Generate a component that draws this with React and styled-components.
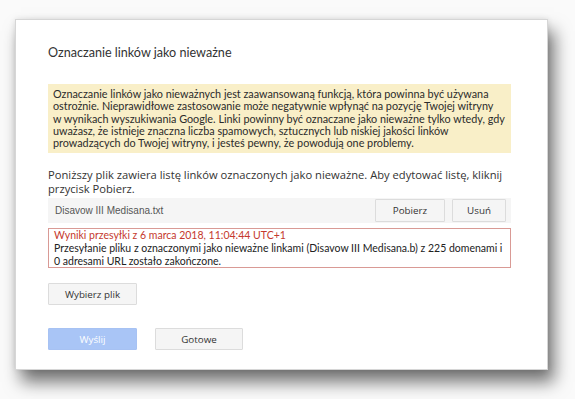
import React from "react";
import styled, { createGlobalStyle } from "styled-components";

const Global = createGlobalStyle`
html, body {
  margin:0;
  padding:0;
  background:#fafafa;
}
body {
  width:575px;
  height:399px;
  overflow:hidden;
  font-family:"Open Sans", "Noto Sans", sans-serif;
}
`;

const Page = styled.div`
width:575px;
height:399px;
padding:19px 0 0 15px;
box-sizing:border-box;
`;

const Dialog = styled.div`
width:533px;
height:351px;
box-sizing:border-box;
background:#fff;
border:1px solid #d6d6d6;
box-shadow: 6px 12px 16px rgba(0,0,0,0.55), 0 0 6px rgba(0,0,0,0.1);
padding:25px 36px 0 32px;
display:flex;
flex-direction:column;
`;

const Title = styled.h2`
margin:0;
font-family:Lato, sans-serif;
font-weight:400;
font-size:12.6px;
line-height:16px;
color:#333;
`;

const Warning = styled.div`
margin-top:23px;
background:#f9efc8;
padding:4px 5px 4px;
font-family:Lato, sans-serif;
font-size:10.8px;
line-height:12.3px;
color:#2b2b2b;
white-space:nowrap;
`;

const Para = styled.p`
margin:15px 0 0;
font-size:11.2px;
line-height:13.5px;
color:#333;
`;

const FileRow = styled.div`
margin-top:3px;
height:25px;
background:#f5f5f5;
display:flex;
align-items:center;
padding:0 5px 0 7px;
gap:7px;
`;

const FileName = styled.span`
flex:1;
font-family:"Liberation Sans", Arial, sans-serif;
font-size:10px;
color:#555;
`;

const Button = styled.button`
width:${p => p.w || 89}px;
height:${p => p.h || 22}px;
padding:0;
box-sizing:border-box;
border:1px solid ${p => p.primary ? "#a7c2f3" : "#dcdcdc"};
background:${p => p.primary ? "#a9c5f6" : "#f5f5f5"};
color:${p => p.primary ? "#fff" : "#333"};
font-family:"Open Sans", sans-serif;
font-size:9.8px;
font-weight:500;
border-radius:1px;
`;

const Result = styled.div`
margin-top:5px;
border:1px solid #d99a95;
padding:0 5px;
font-family:Lato, sans-serif;
font-size:10.5px;
line-height:12.6px;
color:#222;
white-space:nowrap;
`;

const ResultHead = styled.div`
color:#c5392d;
`;

const Row = styled.div`
display:flex;
gap:${p => p.gap || 0}px;
margin-top:${p => p.mt || 0}px;
`;

export default function App() {
  return (
    <>
      <Global />
      <Page>
        <Dialog>
          <Title>Oznaczanie linków jako nieważne</Title>
          <Warning>
            Oznaczanie linków jako nieważnych jest zaawansowaną funkcją, która powinna być używana<br />
            ostrożnie. Nieprawidłowe zastosowanie może negatywnie wpłynąć na pozycję Twojej witryny<br />
            w wynikach wyszukiwania Google. Linki powinny być oznaczane jako nieważne tylko wtedy, gdy<br />
            uważasz, że istnieje znaczna liczba spamowych, sztucznych lub niskiej jakości linków<br />
            prowadzących do Twojej witryny, i jesteś pewny, że powodują one problemy.
          </Warning>
          <Para>
            Poniższy plik zawiera listę linków oznaczonych jako nieważne. Aby edytować listę, kliknij<br />
            przycisk Pobierz.
          </Para>
          <FileRow>
            <FileName>Disavow III Medisana.txt</FileName>
            <Button w={70} h={23}>Pobierz</Button>
            <Button w={54} h={23}>Usuń</Button>
          </FileRow>
          <Result>
            <ResultHead>Wyniki przesyłki z 6 marca 2018, 11:04:44 UTC+1</ResultHead>
            Przesyłanie pliku z oznaczonymi jako nieważne linkami (Disavow III Medisana.b) z 225 domenami i<br />
            0 adresami URL zostało zakończone.
          </Result>
          <Row mt={15}>
            <Button>Wybierz plik</Button>
          </Row>
          <Row mt={23} gap={18}>
            <Button primary>Wyślij</Button>
            <Button w={88}>Gotowe</Button>
          </Row>
        </Dialog>
      </Page>
    </>
  );
}
